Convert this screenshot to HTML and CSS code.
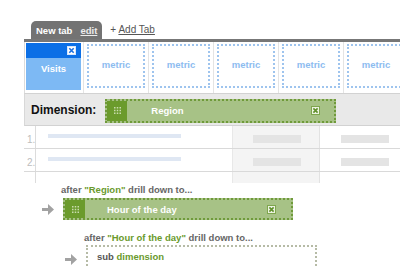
FILE: index.html
```html
<!DOCTYPE html>
<html>
<head>
<meta charset="utf-8">
<link rel="stylesheet" href="styles.css">
</head>
<body>
<div class="page">
  <div class="tabs">
    <div class="tab"><span>New tab</span><span class="edit">edit</span></div>
    <div class="addtab">+ <span class="u">Add Tab</span></div>
  </div>
  <div class="main">
    <div class="metrics">
      <div class="vcell">
        <div class="visits">
          <div class="vtop">
            <svg class="vclose" width="9" height="9" viewBox="0 0 9 9"><rect x="0.5" y="0.5" width="8" height="8" fill="#fff" stroke="#d7e6fb"/><path d="M2.3 2.3L6.7 6.7M6.7 2.3L2.3 6.7" stroke="#1a6fe0" stroke-width="1.6"/></svg>
          </div>
          <div class="vbot">Visits</div>
        </div>
      </div>
      <div class="mcell"><div class="mbox">metric</div></div>
      <div class="mcell"><div class="mbox">metric</div></div>
      <div class="mcell"><div class="mbox">metric</div></div>
      <div class="mcell"><div class="mbox">metric</div></div>
      <div class="mcell"><div class="mbox">metric</div></div>
    </div>
    <div class="dimension">
      <span class="dlabel">Dimension:</span>
      <div class="pill pill1">
        <div class="handle"><svg width="7" height="7" viewBox="0 0 7 7"><g fill="#c9dcae"><rect x="0" y="0" width="1.5" height="1.5"/><rect x="2.75" y="0" width="1.5" height="1.5"/><rect x="5.5" y="0" width="1.5" height="1.5"/><rect x="0" y="2.75" width="1.5" height="1.5"/><rect x="2.75" y="2.75" width="1.5" height="1.5"/><rect x="5.5" y="2.75" width="1.5" height="1.5"/><rect x="0" y="5.5" width="1.5" height="1.5"/><rect x="2.75" y="5.5" width="1.5" height="1.5"/><rect x="5.5" y="5.5" width="1.5" height="1.5"/></g></svg></div>
        <div class="ptext">Region</div>
        <svg class="pclose" width="9" height="9" viewBox="0 0 9 9"><rect x="0.5" y="0.5" width="8" height="8" fill="#eef4e4" stroke="#7ea64d"/><path d="M2.4 2.4L6.6 6.6M6.6 2.4L2.4 6.6" stroke="#5f8f2a" stroke-width="1.6"/></svg>
      </div>
    </div>
    <div class="table">
      <div class="row">
        <div class="num">1.</div>
        <div class="dcell"><div class="bbar"></div></div>
        <div class="shade"><div class="gbar"></div></div>
        <div class="lcell"><div class="gbar"></div></div>
      </div>
      <div class="row">
        <div class="num">2.</div>
        <div class="dcell"><div class="bbar"></div></div>
        <div class="shade"><div class="gbar"></div></div>
        <div class="lcell"><div class="gbar"></div></div>
      </div>
      <div class="row last">
        <div class="num"></div>
        <div class="dcell"></div>
        <div class="shade"></div>
        <div class="lcell"></div>
      </div>
    </div>
  </div>
  <div class="drill drill1">
    <div class="dtext">after <span class="g">"Region"</span> drill down to...</div>
    <div class="drow">
      <svg class="arrow" width="12" height="11" viewBox="0 0 12 11"><path d="M0 4H6V0L12 5.5L6 11V7H0Z" fill="#a2a2a2"/></svg>
      <div class="pill pill2">
        <div class="handle"><svg width="7" height="7" viewBox="0 0 7 7"><g fill="#c9dcae"><rect x="0" y="0" width="1.5" height="1.5"/><rect x="2.75" y="0" width="1.5" height="1.5"/><rect x="5.5" y="0" width="1.5" height="1.5"/><rect x="0" y="2.75" width="1.5" height="1.5"/><rect x="2.75" y="2.75" width="1.5" height="1.5"/><rect x="5.5" y="2.75" width="1.5" height="1.5"/><rect x="0" y="5.5" width="1.5" height="1.5"/><rect x="2.75" y="5.5" width="1.5" height="1.5"/><rect x="5.5" y="5.5" width="1.5" height="1.5"/></g></svg></div>
        <div class="ptext">Hour of the day</div>
        <svg class="pclose" width="9" height="9" viewBox="0 0 9 9"><rect x="0.5" y="0.5" width="8" height="8" fill="#eef4e4" stroke="#7ea64d"/><path d="M2.4 2.4L6.6 6.6M6.6 2.4L2.4 6.6" stroke="#5f8f2a" stroke-width="1.6"/></svg>
      </div>
    </div>
  </div>
  <div class="drill drill2">
    <div class="dtext">after <span class="g">"Hour of the day"</span> drill down to...</div>
    <div class="drow">
      <svg class="arrow" width="12" height="11" viewBox="0 0 12 11"><path d="M0 4H6V0L12 5.5L6 11V7H0Z" fill="#a2a2a2"/></svg>
      <div class="subbox">sub <span class="g">dimension</span></div>
    </div>
  </div>
</div>
</body>
</html>
```
FILE: styles.css
```css
html, body {
  margin: 0;
  padding: 0;
  background: #fff;
}
body {
  font-family: "Liberation Sans", Arial, sans-serif;
  width: 400px;
  height: 267px;
  overflow: hidden;
}
.page {
  width: 400px;
}
.tabs {
  display: flex;
  align-items: flex-end;
  height: 39px;
  padding-left: 31px;
  box-sizing: border-box;
}
.tab {
  height: 18px;
  padding: 0 5px 0 5px;
  background: #737373;
  border-radius: 5px 5px 0 0;
  display: flex;
  align-items: center;
  gap: 8px;
  color: #fff;
  font-weight: bold;
  font-size: 9.5px;
}
.edit {
  text-decoration: underline;
  color: #ececec;
}
.addtab {
  margin-left: 8px;
  height: 18px;
  line-height: 18px;
  font-size: 10px;
  color: #555;
}
.u {
  text-decoration: underline;
}
.main {
  margin-left: 24px;
  border-top: 3px solid #777;
}
.metrics {
  display: flex;
  height: 51px;
  border-left: 1px solid #dcdcdc;
}
.vcell {
  flex: none;
  width: 59px;
  padding: 1px 0 0 1px;
  box-sizing: border-box;
  border-right: 1px solid #e4e4e4;
}
.visits {
  width: 55px;
  height: 47px;
  display: flex;
  flex-direction: column;
}
.vtop {
  height: 15px;
  background: #0b6fe6;
  display: flex;
  justify-content: flex-end;
  align-items: flex-start;
  padding: 3px 5px 0 0;
  box-sizing: border-box;
}
.vbot {
  flex: 1;
  background: #7db9f4;
  color: #fff;
  font-weight: bold;
  font-size: 9.5px;
  text-align: center;
  padding-top: 5px;
}
.mcell {
  flex: none;
  width: 65px;
  padding: 2px 3px 0 3px;
  box-sizing: border-box;
  border-right: 1px solid #e4e4e4;
}
.mbox {
  width: 58px;
  height: 44px;
  box-sizing: border-box;
  border: 2px dotted #9ec4ee;
  color: #8dbcf0;
  font-weight: bold;
  font-size: 9.5px;
  display: flex;
  align-items: center;
  justify-content: center;
  padding-bottom: 4px;
}
.dimension {
  display: flex;
  align-items: center;
  height: 31px;
  background: #e9e9e9;
  border-top: 1px solid #d2d2d2;
  border-bottom: 1px solid #d2d2d2;
  border-left: 1px solid #d8d8d8;
  padding-left: 6px;
}
.dlabel {
  font-weight: bold;
  font-size: 12px;
  color: #111;
  margin-top: 1px;
}
.pill {
  display: flex;
  align-items: center;
  box-sizing: border-box;
  border: 2px dotted #6f9a3a;
  background: #a7c286;
}
.pill1 {
  margin-left: 9px;
  width: 231px;
  height: 24px;
  margin-top: 2px;
}
.pill2 {
  width: 230px;
  height: 22px;
}
.handle {
  flex: none;
  width: 20px;
  align-self: stretch;
  background: #6b9b2c;
  display: flex;
  align-items: center;
  justify-content: center;
}
.ptext {
  flex: 1;
  color: #fff;
  font-weight: bold;
  font-size: 9.5px;
  padding-left: 24px;
}
.pill2 .ptext {
  padding-left: 22px;
}
.pclose {
  flex: none;
  margin-right: 14px;
}
.pill2 .pclose {
  margin-right: 15px;
}
.table {
  display: flex;
  flex-direction: column;
}
.row {
  display: grid;
  grid-template-columns: 12px 196px 88px 1fr;
  height: 22px;
  border-bottom: 1px solid #d9d9d9;
}
.row.last {
  height: 11px;
  border-bottom: none;
}
.num {
  border-right: 1px solid #dcdcdc;
  color: #bdbdbd;
  font-size: 10px;
  padding: 8px 0 0 3px;
  box-sizing: border-box;
}
.dcell {
  padding: 8px 0 0 12px;
}
.bbar {
  width: 133px;
  height: 4px;
  background: #dfe7f3;
}
.shade {
  background: #f4f4f4;
  border-left: 1px solid #e8e8e8;
  border-right: 1px solid #e2e2e2;
  padding: 9px 0 0 20px;
  box-sizing: border-box;
}
.lcell {
  padding: 9px 0 0 21px;
}
.gbar {
  width: 48px;
  height: 8px;
  background: #e4e4e4;
}
.drill {
  display: flex;
  flex-direction: column;
}
.drill1 {
  margin-left: 42px;
  margin-top: 0;
}
.drill2 {
  margin-left: 65px;
  margin-top: 11px;
}
.dtext {
  padding-left: 19px;
  height: 14px;
  line-height: 14px;
  font-size: 9.5px;
  font-weight: bold;
  color: #666;
}
.g {
  color: #6a9a2c;
}
.drow {
  display: flex;
  align-items: center;
  gap: 9px;
}
.drill1 .drow {
  margin-top: 1px;
}
.drill2 .drow {
  align-items: flex-start;
}
.drill2 .arrow {
  margin-top: 9px;
}
.arrow {
  flex: none;
}
.subbox {
  width: 231px;
  height: 24px;
  box-sizing: border-box;
  border: 2px dotted #b6bba6;
  border-bottom: none;
  padding: 4px 0 0 9px;
  font-size: 9.5px;
  font-weight: bold;
  color: #555;
}
```
